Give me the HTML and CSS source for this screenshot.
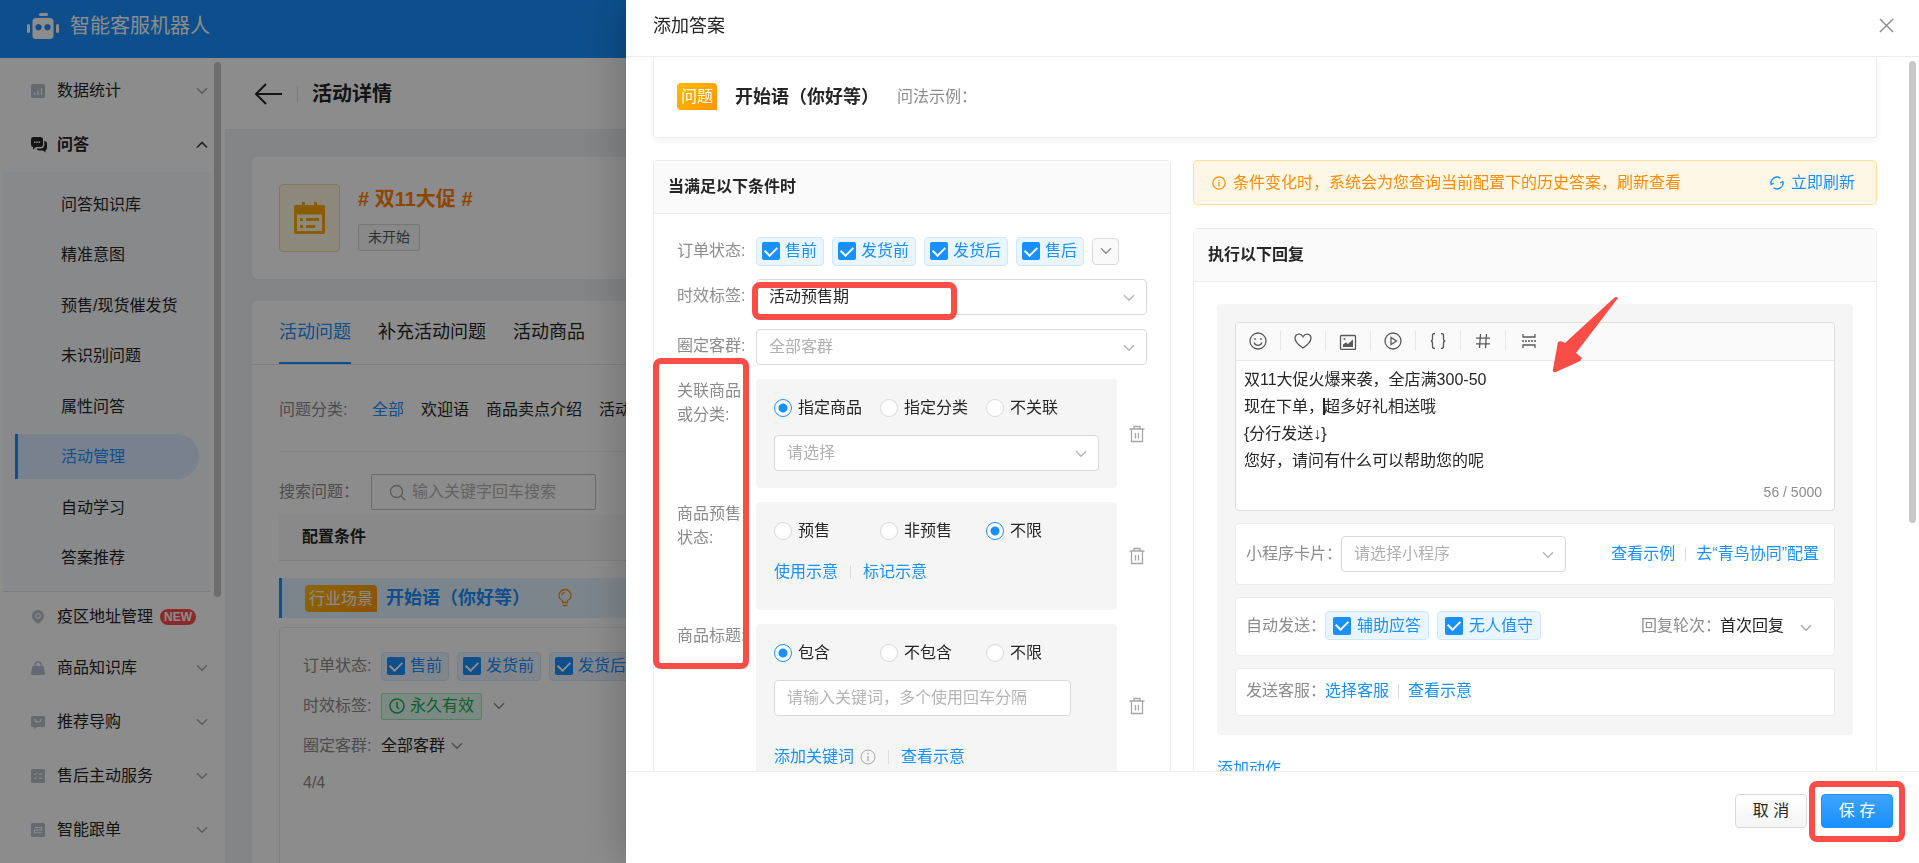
FILE: index.html
```html
<!DOCTYPE html>
<html lang="zh-CN">
<head>
<meta charset="utf-8">
<title>智能客服机器人</title>
<link rel="stylesheet" href="styles.css">
</head>
<body>
<svg class="defs" aria-hidden="true">
  <symbol id="down" viewBox="0 0 12 8"><path d="M1 1.2l5 5 5-5" fill="none" stroke="currentColor" stroke-width="1.4"/></symbol>
  <symbol id="up" viewBox="0 0 12 8"><path d="M1 6.5l5-5 5 5" fill="none" stroke="currentColor" stroke-width="1.6"/></symbol>
  <symbol id="trash" viewBox="0 0 16 18"><path d="M.5 4h15M5 3.500V1.500h6v2M2.500 4v12.500h11V4M6.500 8v5.500M9.500 8v5.500" fill="none" stroke="currentColor" stroke-width="1.3"/></symbol>
</svg>

<div class="app">
  <header class="topbar">
    <svg class="logo" viewBox="0 0 32 26" fill="#fff"><rect x="12" y="0" width="9" height="3" rx="1.500"/><rect x="0" y="11" width="3" height="9" rx="1.500"/><rect x="29" y="11" width="3" height="9" rx="1.500"/><path fill-rule="evenodd" d="M9 5h14q3.500 0 3.500 3.500v14q0 3.500-3.500 3.500H9q-3.500 0-3.500-3.500v-14Q5.500 5 9 5zM11.500 11a3.200 3.200 0 1 0 .01 0zM20.500 11a3.200 3.200 0 1 0 .01 0z"/></svg>
    <span>智能客服机器人</span>
  </header>

  <div class="columns">
    <nav class="sidebar">
      <a href="#" class="item"><svg class="ico" viewBox="0 0 14 14"><rect width="14" height="14" rx="1.500"/><path d="M3.500 11V8.500M7 11V6.500M10.500 11V4" stroke="#fff" stroke-width="1.200"/></svg><span>数据统计</span><svg class="chev"><use href="#down"/></svg></a>
      <a href="#" class="item open"><svg class="ico chat" viewBox="0 0 16 16"><path d="M2.500 0h7Q12 0 12 2.500v5Q12 10 9.500 10H5L2 12.500V10Q0 9.500 0 7.500v-5Q0 0 2.500 0z"/><path d="M13.300 4Q16 4.200 16 6.500v4.500q0 2-1.500 2.300V15.500L12 13.500H8Q6 13.500 5.500 11.500h4q3.800-.2 3.800-4z"/><path d="M3 5.200h1.500M5.300 5.200h1.500M7.600 5.200h1.500" stroke="#fff" stroke-width="1.400"/></svg><span>问答</span><svg class="chev"><use href="#up"/></svg></a>
      <div class="sub">
        <a href="#">问答知识库</a>
        <a href="#">精准意图</a>
        <a href="#">预售/现货催发货</a>
        <a href="#">未识别问题</a>
        <a href="#">属性问答</a>
        <a href="#" class="current">活动管理</a>
        <a href="#">自动学习</a>
        <a href="#">答案推荐</a>
      </div>
      <a href="#" class="item short"><svg class="ico" viewBox="0 0 14 14"><path fill-rule="evenodd" d="M7 0a6 6 0 0 1 6 6q0 4-6 8Q1 10 1 6a6 6 0 0 1 6-6zM7 3a3 3 0 1 0 .01 0z"/><circle cx="7" cy="6" r="1.800"/></svg><span>疫区地址管理</span><em class="new">NEW</em></a>
      <a href="#" class="item"><svg class="ico" viewBox="0 0 14 14"><path d="M1.500 5h11L14 12.500q0 1.500-1.500 1.500h-11Q0 14 0 12.500z"/><path d="M4 7V4a3 3 0 0 1 6 0v3" fill="none" stroke="#b9c1cc" stroke-width="1.400"/></svg><span>商品知识库</span><svg class="chev"><use href="#down"/></svg></a>
      <a href="#" class="item"><svg class="ico" viewBox="0 0 14 14"><path d="M1.500 1h11Q14 1 14 2.500v8q0 1.500-1.500 1.500H6l-3 2v-2H1.500Q0 12 0 10.500v-8Q0 1 1.500 1z"/><path d="M4 4q0 3 3 3t3-3" fill="none" stroke="#fff" stroke-width="1.200"/></svg><span>推荐导购</span><svg class="chev"><use href="#down"/></svg></a>
      <a href="#" class="item"><svg class="ico" viewBox="0 0 14 14"><rect width="14" height="14" rx="1.500"/><path d="M3 5l1 1 1.500-2M3 9l1 1 1.500-2M7.500 5.200H11M7.500 9.200H11" fill="none" stroke="#fff"/></svg><span>售后主动服务</span><svg class="chev"><use href="#down"/></svg></a>
      <a href="#" class="item"><svg class="ico" viewBox="0 0 14 14"><rect width="14" height="14" rx="1.500"/><path d="M3.500 4.500h7v2.500h-7v2.800h7" fill="none" stroke="#fff" stroke-width="1.100"/></svg><span>智能跟单</span><svg class="chev"><use href="#down"/></svg></a>
      <i class="thumb"></i>
    </nav>

    <main class="main">
      <div class="pagehead">
        <svg class="back" viewBox="0 0 28 22"><path d="M12 1L2 11l10 10M2 11h26" fill="none" stroke="currentColor" stroke-width="2"/></svg>
        <i class="bar"></i>
        <h1>活动详情</h1>
      </div>
      <section class="card promo">
        <div class="promo-icon"><svg viewBox="0 0 31 32" fill="#ffa800"><path fill-rule="evenodd" d="M8 0h3v3h9V0h3v3h6q2 0 2 2v25q0 2-2 2H2q-2 0-2-2V5q0-2 2-2h6zM3 12.500V29h25V12.500z"/><path d="M6 16h3v3H6zM12 16h13v3H12zM6 23h3v3H6zM12 23h9v3h-9z"/></svg></div>
        <div>
          <h2># 双11大促 #</h2>
          <span class="state">未开始</span>
        </div>
      </section>
      <section class="card">
        <div class="tabs"><a href="#" class="on">活动问题</a><a href="#">补充活动问题</a><a href="#">活动商品</a></div>
        <div class="inner">
          <div class="filter"><span class="dim">问题分类:</span><a href="#" class="on">全部</a><a href="#">欢迎语</a><a href="#">商品卖点介绍</a><a href="#">活动</a></div>
          <div class="search">
            <label class="dim" for="q">搜索问题：</label>
            <div class="searchbox"><svg viewBox="0 0 17 17"><path d="M11.800 11.800l4.500 4.500M13.500 7.500a6 6 0 1 1-12 0 6 6 0 0 1 12 0z" fill="none" stroke="#a6a6a6" stroke-width="1.300"/></svg><input id="q" placeholder="输入关键字回车搜索"></div>
          </div>
          <div class="thead">配置条件</div>
          <div class="qrow"><span class="tag">行业场景</span><b>开始语（你好等）</b>
            <svg class="bulb" viewBox="0 0 14 18" fill="none" stroke="#fa8c16" stroke-width="1.300"><path d="M4.500 13.500v-2Q1 10 1 6.500a6 6 0 0 1 12 0q0 3.500-3.500 5v2zM4.500 16.500h5M4 6.500q0-2.500 2.500-3"/></svg></div>
          <div class="answer">
            <div class="line chips"><span class="dim">订单状态:</span>
              <label class="chip"><input type="checkbox" checked>售前</label>
              <label class="chip"><input type="checkbox" checked>发货前</label>
              <label class="chip"><input type="checkbox" checked>发货后</label></div>
            <div class="line"><span class="dim">时效标签:</span><span class="valid"><svg viewBox="0 0 16 16" fill="none" stroke="currentColor" stroke-width="1.500"><circle cx="8" cy="8" r="7"/><path d="M8 4v5l2 2"/></svg>永久有效</span><svg class="chev"><use href="#down"/></svg></div>
            <div class="line tight"><span class="dim">圈定客群:</span><span>全部客群</span><svg class="chev near"><use href="#down"/></svg></div>
            <div class="dim">4/4</div>
          </div>
        </div>
      </section>
    </main>
  </div>
</div>

<div class="mask"></div>

<aside class="drawer">
  <header class="dhead"><span>添加答案</span>
    <button type="button" class="close" aria-label="关闭"><svg viewBox="0 0 16 16"><path d="M1 1l14 14M15 1L1 15" stroke="currentColor" stroke-width="1.500"/></svg></button>
  </header>

  <div class="dbody">
    <section class="question"><span class="tag">问题</span><b>开始语（你好等）</b><span class="dim">问法示例：</span></section>
    <div class="split">
      <section class="panel">
        <h3>当满足以下条件时</h3>
        <form class="form">
          <div class="row center"><span class="lab">订单状态:</span>
            <div class="chips">
              <label class="chip"><input type="checkbox" checked>售前</label>
              <label class="chip"><input type="checkbox" checked>发货前</label>
              <label class="chip"><input type="checkbox" checked>发货后</label>
              <label class="chip"><input type="checkbox" checked>售后</label>
              <button type="button" class="more" aria-label="更多"><svg class="chev"><use href="#down"/></svg></button>
            </div>
          </div>
          <div class="row"><label class="lab mid" for="period">时效标签:</label>
            <div class="pick dark"><select id="period"><option>活动预售期</option></select><svg class="chev"><use href="#down"/></svg></div></div>
          <div class="row"><label class="lab mid" for="group">圈定客群:</label>
            <div class="pick"><select id="group"><option>全部客群</option></select><svg class="chev"><use href="#down"/></svg></div></div>
          <div class="row"><span class="lab">关联商品或分类:</span>
            <div class="block">
              <div class="radios">
                <label><input type="radio" name="rel" checked>指定商品</label><label><input type="radio" name="rel">指定分类</label><label><input type="radio" name="rel">不关联</label>
              </div>
              <div class="pick"><select aria-label="指定商品"><option>请选择</option></select><svg class="chev"><use href="#down"/></svg></div>
            </div>
            <button type="button" class="del" aria-label="删除"><svg><use href="#trash"/></svg></button></div>
          <div class="row"><span class="lab">商品预售状态:</span>
            <div class="block">
              <div class="radios">
                <label><input type="radio" name="pre">预售</label><label><input type="radio" name="pre">非预售</label><label><input type="radio" name="pre" checked>不限</label>
              </div>
              <div class="links"><a href="#">使用示意</a><i></i><a href="#">标记示意</a></div>
            </div>
            <button type="button" class="del" aria-label="删除"><svg><use href="#trash"/></svg></button></div>
          <div class="row"><span class="lab">商品标题:</span>
            <div class="block">
              <div class="radios">
                <label><input type="radio" name="ttl" checked>包含</label><label><input type="radio" name="ttl">不包含</label><label><input type="radio" name="ttl">不限</label>
              </div>
              <input class="words" aria-label="关键词" placeholder="请输入关键词，多个使用回车分隔">
              <div class="links low"><a href="#">添加关键词</a><svg class="info" viewBox="0 0 16 16" fill="none" stroke="currentColor"><circle cx="8" cy="8" r="7"/><path d="M8 7v5M8 4v1.500" stroke-width="1.300"/></svg><i></i><a href="#">查看示意</a></div>
            </div>
            <button type="button" class="del" aria-label="删除"><svg><use href="#trash"/></svg></button></div>
        </form>
        <div class="mark mark-period"></div>
        <div class="mark mark-labels"></div>
      </section>

      <div class="reply">
        <div class="alert">
          <svg viewBox="0 0 14 14" fill="none" stroke="currentColor" stroke-width="1.200"><circle cx="7" cy="7" r="6.200"/><path d="M7 6v4.500M7 3.500v1.300"/></svg>
          <span>条件变化时，系统会为您查询当前配置下的历史答案，刷新查看</span>
          <a href="#"><svg viewBox="0 0 14 14" fill="none" stroke="currentColor" stroke-width="1.300"><path d="M1.200 8.500A6 6 0 0 1 10.500 2.200M12.800 5.500A6 6 0 0 1 3.500 11.800M.5 5.500l.7 3 2.600-1.300M13.500 8.500l-.7-3-2.600 1.300"/></svg>立即刷新</a>
        </div>
        <section class="panel">
          <h3>执行以下回复</h3>
          <div class="pbody">
            <div class="stack">
              <div class="editor">
                <div class="tools">
                  <button type="button" aria-label="表情"><svg viewBox="0 0 18 18"><circle cx="9" cy="9" r="8"/><path d="M6 6v2M12 6v2M5 10.500q1.200 2.800 4 2.800t4-2.800"/></svg></button>
                  <button type="button" aria-label="收藏"><svg viewBox="0 0 18 18"><path d="M9 16Q1 10.500 1 6.200 1.200 2.300 4.800 2.100 7.500 2 9 4.800 10.500 2 13.200 2.100 16.800 2.300 17 6.200 17 10.500 9 16z"/></svg></button>
                  <button type="button" aria-label="图片"><svg viewBox="0 0 18 18"><rect x="1.500" y="3.500" width="15" height="14" rx="1"/><path d="M4 15v-2.500l3-2 2 1.500 5-4.500V15z" fill="currentColor" stroke="none"/><path d="M4.500 7h2"/></svg></button>
                  <button type="button" aria-label="视频"><svg viewBox="0 0 18 18"><circle cx="9" cy="9" r="8"/><path d="M7 5.500v7L12.500 9z"/></svg></button>
                  <button type="button" aria-label="变量"><svg viewBox="0 0 18 18"><path d="M6 1.500q-2.500 0-2.500 2v3Q3.500 9 1.800 9q1.700 0 1.700 2.500v3q0 2 2.500 2M12 1.500q2.500 0 2.500 2v3Q14.500 9 16.200 9q-1.700 0-1.700 2.500v3q0 2-2.500 2"/></svg></button>
                  <button type="button" aria-label="话题"><svg viewBox="0 0 18 18"><path d="M6.500 2l-1 14M12.500 2l-1 14M2 6.200h14M2 11.800h14"/></svg></button>
                  <button type="button" aria-label="分行"><svg viewBox="0 0 18 18"><path d="M3 2v3h12V2M3 16v-3h12v3"/><path d="M2 9h14" stroke-dasharray="2 1"/></svg></button>
                </div>
                <textarea rows="4" aria-label="回复内容">双11大促火爆来袭，全店满300-50
现在下单，超多好礼相送哦
{分行发送↓}
您好，请问有什么可以帮助您的呢</textarea>
                <i class="caret"></i>
                <div class="count">56 / 5000</div>
              </div>
              <div class="box tall"><label class="dim" for="mini">小程序卡片：</label>
                <div class="pick mini"><select id="mini"><option>请选择小程序</option></select><svg class="chev"><use href="#down"/></svg></div>
                <div class="links end"><a href="#">查看示例</a><i></i><a href="#">去“青鸟协同”配置</a></div></div>
              <div class="box medium"><span class="dim">自动发送：</span>
                <div class="chips wide"><label class="chip"><input type="checkbox" checked>辅助应答</label><label class="chip"><input type="checkbox" checked>无人值守</label></div>
                <div class="turn"><label class="dim" for="turn">回复轮次：</label><div class="plain"><select id="turn"><option>首次回复</option></select><svg class="chev"><use href="#down"/></svg></div></div></div>
              <div class="box"><span class="dim">发送客服：</span><div class="links near"><a href="#">选择客服</a><i></i><a href="#">查看示意</a></div></div>
            </div>
            <a href="#" class="action">添加动作</a>
          </div>
        </section>
      </div>
    </div>
    <i class="thumb"></i>
  </div>

  <footer class="dfoot">
    <button type="button" class="btn">取 消</button>
    <div class="savewrap"><button type="button" class="btn primary">保 存</button><div class="mark mark-save"></div></div>
  </footer>
  <svg class="arrow" viewBox="0 0 66 76"><path d="M62 1q2-2 4 0L24 56l6 5q-1 3-4 4L4 75q-4 1-3-3L6 45q3-2 7 1z" fill="#f94d48"/></svg>
</aside>
</body>
</html>
```

FILE: styles.css
```css
* { box-sizing: border-box; }
html, body { height: 100%; overflow: hidden; }
body {
  margin: 0;
  font: 16px/24px "Liberation Sans", "Noto Sans CJK SC", sans-serif;
  color: #262626;
}
a { color: #1890ff; text-decoration: none; }
button, input, select, textarea { font: inherit; color: inherit; margin: 0; }
button { border: 0; padding: 0; background: none; }
h1, h2, h3 { margin: 0; }
svg { display: block; flex: none; }
.defs { position: absolute; width: 0; height: 0; }
.dim { color: #8c8c8c; white-space: nowrap; }
.chev { width: 12px; height: 8px; color: #a6a6a6; }

.app { height: 100%; display: flex; flex-direction: column; overflow: hidden; }
.topbar {
  height: 58px; flex: none; padding: 0 0 6px 27px;
  display: flex; align-items: center; gap: 11px;
  background: #1890ff; color: #fff; font-size: 20px;
}
.logo { width: 32px; height: 26px; }
.columns { flex: 1; min-height: 0; display: flex; overflow: hidden; }

.sidebar {
  position: relative; width: 225px; flex: none; overflow: hidden;
  padding: 6px 0 0 3px; background: #fff;
}
.item {
  width: 222px; height: 54px; padding: 0 17px 0 28px;
  display: flex; align-items: center; color: #262626;
}
.item span { margin-left: 12px; }
.item .ico { width: 14px; height: 14px; fill: #b9c1cc; }
.item .ico.chat { width: 16px; height: 16px; fill: #262626; margin-right: -2px; }
.item .chev { margin-left: auto; }
.item.open { font-weight: 700; }
.item.open .chev { color: #404040; }
.item.short { height: 49px; }
.new {
  margin-left: 7px; padding: 0 4px; border-radius: 8px;
  background: #ff4d4f; color: #fff; font: 700 12px/16px "Liberation Sans", sans-serif;
}
.sub {
  height: 420px; width: 207px; padding: 10px 11px 11px 12px;
  display: grid; align-content: space-between;
  background: #f6f9fd; border-bottom: 1px solid #dfe5ee;
}
.sub a {
  height: 45px; line-height: 46px; padding-left: 43px;
  border-left: 3px solid transparent; border-radius: 0 23px 23px 0; color: #262626;
}
.sub .current { color: #1890ff; background: #dcedff; border-left-color: #1890ff; }
.thumb { position: absolute; width: 7px; border-radius: 4px; background: #c8c8c8; }
.sidebar .thumb { top: 4px; right: 4px; height: 535px; }

.main { flex: 1; min-width: 0; overflow: hidden; background: #eef0f4; }
.pagehead {
  height: 71px; padding-left: 29px; display: flex; align-items: center; background: #fff;
}
.back { width: 28px; height: 22px; }
.bar { width: 1px; height: 16px; margin: 0 14px 0 15px; background: #e4e4e4; }
h1 { font-size: 20px; line-height: 28px; }
.card { margin: 28px 28px 22px 27px; border-radius: 6px; background: #fff; }
.card + .card { margin-top: 22px; }
.promo { padding: 27px; height: 122px; display: flex; gap: 18px; }
.promo-icon {
  width: 61px; height: 68px; display: grid; place-items: center;
  border: 1px solid #ffd591; border-radius: 4px; background: #fff8e0;
}
.promo-icon svg { width: 31px; height: 32px; }
h2 { font-size: 20px; line-height: 30px; color: #ff8000; margin-bottom: 10px; }
.state {
  display: inline-block; padding: 0 9px; border: 1px solid #d9d9d9; border-radius: 2px;
  background: #fafafa; color: #595959; font-size: 14px; line-height: 25px;
}
.tabs { height: 64px; padding: 0 27px; display: flex; gap: 27px; border-bottom: 1px solid #e8e8e8; }
.tabs a { font-size: 18px; line-height: 63px; color: #262626; }
.tabs .on { color: #1890ff; border-bottom: 2px solid #1890ff; }
.inner { padding: 0 27px; }
.filter {
  height: 87px; padding-top: 3px; display: flex; align-items: center; gap: 17px;
  border-bottom: 1px solid #f0f0f0; white-space: nowrap;
}
.filter .dim { width: 76px; }
.filter a { color: #262626; }
.filter .on { color: #1890ff; }
.search { padding: 22px 0 5px; display: flex; align-items: center; }
.search .dim { width: 92px; }
.searchbox {
  width: 225px; height: 36px; padding: 0 17px; display: flex; align-items: center; gap: 6px;
  border: 1px solid #bfbfbf; border-radius: 2px;
}
.searchbox svg { width: 17px; height: 17px; }
.searchbox input { width: 160px; border: 0; padding: 0; background: none; }
::placeholder { color: #b5b5b5; opacity: 1; }
.thead {
  height: 46px; padding-left: 23px; line-height: 44px; font-weight: 700;
  background: #fafafa; border-bottom: 1px solid #e8e8e8;
}
.qrow {
  height: 40px; margin: 17px 0 9px; padding-left: 23px;
  display: flex; align-items: center; gap: 9px;
  border-left: 3px solid #1890ff; background: #e4f3ff; font-size: 18px; color: #1890ff;
}
.tag {
  padding: 0 4px; border-radius: 4px 4px 0 4px; font-size: 16px; line-height: 27px;
  color: #fff; background: linear-gradient(135deg, #ffba00, #ff9500);
}
.bulb { width: 14px; height: 18px; margin-left: 19px; }
.answer { min-height: 480px; padding: 23px; border: 1px solid #ececec; border-radius: 4px; }
.line { height: 42px; display: flex; align-items: center; white-space: nowrap; }
.line.chips { height: 30px; margin-bottom: 4px; }
.line > .dim { width: 78px; flex: none; }
.line.chips > .dim { width: 70px; }
.line.tight { height: 38px; margin-bottom: 6px; }
.line .chev { margin-left: 11px; color: #8c8c8c; }
.line .chev.near { margin-left: 6px; }
.valid {
  height: 27px; padding: 0 7px; display: flex; align-items: center; gap: 5px;
  border: 1px solid #9be8b8; border-radius: 2px; background: #e4fbee; color: #13ae57;
}
.valid svg { width: 16px; height: 16px; }

.chips { display: flex; align-items: center; gap: 8px; }
.chip {
  height: 29px; padding: 0 6px 0 5px; display: flex; align-items: center; gap: 5px;
  border: 1px solid #cfe8ff; border-radius: 4px; background: #e9f5ff; color: #1890ff;
  white-space: nowrap;
}
.chips.wide .chip { padding: 0 7px; gap: 6px; }
input[type="checkbox"] {
  appearance: none; width: 18px; height: 18px; flex: none;
  display: grid; place-items: center; border-radius: 2px; background: #1890ff;
}
input[type="checkbox"]::after {
  content: ""; width: 6px; height: 10px; margin-bottom: 3px;
  border: solid #fff; border-width: 0 2px 2px 0; transform: rotate(45deg);
}

.mask { position: fixed; inset: 0; background: rgba(0, 0, 0, .45); }

.drawer {
  position: fixed; inset: 0 0 0 626px; display: flex; flex-direction: column;
  background: #fff; box-shadow: -4px 0 40px rgba(0, 0, 0, .22);
}
.dhead {
  height: 57px; flex: none; padding: 0 25px 5px 27px;
  display: flex; align-items: center; justify-content: space-between;
  border-bottom: 1px solid #ececec; font-size: 18px;
}
.close { color: #8c8c8c; }
.close svg { width: 15px; height: 15px; }
.dbody { position: relative; flex: 1; min-height: 0; overflow: hidden; padding: 0 42px 0 27px; }
.dbody > .thumb { top: 4px; right: 3px; height: 462px; }
.question {
  padding: 26px 23px 27px; display: flex; align-items: center;
  border: 1px solid #ececec; border-top: 0; border-radius: 0 0 4px 4px;
  box-shadow: 0 3px 8px rgba(0, 0, 0, .05);
}
.question b { margin: 0 18px; font-size: 18px; }
.split {
  display: grid; grid-template-columns: minmax(0, 518fr) minmax(0, 684fr);
  gap: 22px; margin-top: 22px;
}
.panel { position: relative; border: 1px solid #ececec; border-radius: 4px; }
h3 {
  height: 53px; padding-left: 14px; line-height: 51px; font-size: 16px; font-weight: 700;
  border-bottom: 1px solid #ececec; background: #fafafa;
}
.form { padding: 23px 23px 40px; display: grid; gap: 14px; }
.row { display: flex; min-width: 0; }
.row.center { align-items: center; height: 28px; }
.lab { width: 70px; margin-right: 9px; flex: none; color: #8c8c8c; }
.lab.mid { line-height: 34px; }
.more {
  width: 27px; height: 27px; display: grid; place-items: center;
  border: 1px solid #d9d9d9; border-radius: 4px; background: #fafafa;
}
.more .chev { color: #8c8c8c; }
.pick { position: relative; flex: 1; min-width: 0; color: #b0b0b0; }
.pick.dark { color: #262626; }
.pick select {
  appearance: none; display: block; width: 100%; height: 36px; padding: 0 30px 0 12px;
  border: 1px solid #d9d9d9; border-radius: 4px; background: #fff;
}
.pick .chev { position: absolute; right: 12px; top: 15px; color: #b5b5b5; }
.block {
  flex: 1; min-width: 0; min-height: 108px; padding: 17px 18px;
  display: grid; align-content: start; gap: 15px; border-radius: 4px; background: #f5f5f5;
}
.radios { display: grid; grid-template-columns: repeat(3, 106px); }
.radios label { display: flex; align-items: center; gap: 6px; white-space: nowrap; }
input[type="radio"] {
  appearance: none; width: 18px; height: 18px; flex: none;
  border: 1px solid #d9d9d9; border-radius: 50%; background: #fff;
}
input[type="radio"]:checked { border: 1px solid #1890ff; background: radial-gradient(#1890ff 4px, #fff 5px); }
.words {
  width: 100%; max-width: 297px; height: 36px; padding: 0 12px;
  border: 1px solid #d9d9d9; border-radius: 4px; background: #fff;
}
.links { display: flex; align-items: center; height: 28px; white-space: nowrap; }
.links i { width: 1px; height: 14px; margin: 0 12px; background: #dcdcdc; }
.links.low { margin-top: 12px; }
.links.end { margin-left: auto; padding-right: 15px; }
.links.end i { margin: 0 10px; }
.links.near i { margin: 0 9px; }
.info { width: 16px; height: 16px; margin-left: 6px; color: #a6a6a6; }
.del { align-self: center; margin-left: 12px; color: #a6a6a6; }
.del svg { width: 16px; height: 18px; margin-right: 2px; }

.reply { display: grid; align-content: start; gap: 23px; }
.alert {
  height: 45px; padding: 0 21px 0 18px; display: flex; align-items: center; gap: 7px;
  border: 1px solid #ffe0a0; border-radius: 4px; background: #fff7e6; color: #ff8c00;
  white-space: nowrap;
}
.alert svg { width: 14px; height: 14px; }
.alert a { margin-left: auto; display: flex; align-items: center; gap: 7px; }
.pbody { padding: 22px 23px 23px; }
.stack {
  padding: 18px 18px 19px; display: grid; gap: 12px;
  border-radius: 4px; background: #f5f5f5;
}
.editor {
  position: relative; border: 1px solid #dcdcdc; border-radius: 4px; background: #fff; overflow: hidden;
}
.tools {
  height: 38px; padding-bottom: 2px; display: flex; align-items: center;
  background: #fafafa; border-bottom: 1px solid #e8e8e8;
}
.tools button {
  width: 45px; height: 20px; display: grid; place-items: center; color: #595959;
  border-right: 1px solid #e8e8e8;
}
.tools button:last-child { border-right: 0; }
.tools svg { width: 18px; height: 18px; fill: none; stroke: currentColor; stroke-width: 1.300; }
textarea {
  display: block; width: 100%; padding: 5px 8px; border: 0; resize: none; overflow: hidden;
  line-height: 27px; background: none;
}
.caret { position: absolute; left: 87px; top: 75px; width: 2px; height: 17px; background: #262626; }
.count { padding: 0 12px 5px; text-align: right; font-size: 14px; line-height: 26px; color: #8c8c8c; }
.box {
  min-height: 48px; padding: 0 0 2px 10px; display: flex; align-items: center;
  border: 1px solid #ececec; border-radius: 4px; background: #fff;
}
.box.medium { min-height: 59px; }
.box.tall { min-height: 62px; padding-bottom: 0; }
.box .dim { width: 79px; }
.box.tall .dim { width: 95px; }
.pick.mini { flex: 0 1 225px; }
.turn { margin-left: auto; display: flex; align-items: center; }
.plain { position: relative; padding-right: 22px; }
.plain select { appearance: none; width: 92px; padding: 0; border: 0; background: none; }
.plain .chev { position: absolute; right: 22px; top: 10px; }
.action { display: block; margin-top: 22px; }

.dfoot {
  height: 92px; flex: none; padding: 22px 26px 0; display: flex; justify-content: flex-end; gap: 14px;
  border-top: 1px solid #ececec; background: #fff;
}
.btn {
  width: 72px; height: 34px; border: 1px solid #d9d9d9; border-radius: 4px;
  background: linear-gradient(#fff, #f5f5f5);
}
.btn.primary { border-color: #1890ff; color: #fff; background: linear-gradient(#40a3ff, #1890ff); }
.savewrap { position: relative; height: 34px; }
.mark { position: absolute; border: 6px solid #f94d48; border-radius: 8px; pointer-events: none; }
.mark-period { left: 98px; top: 121px; width: 205px; height: 38px; }
.mark-labels { left: -1px; top: 197px; width: 96px; height: 311px; }
.mark-save { inset: -13px -12px -14px; }
.arrow { position: absolute; left: 926px; top: 297px; width: 66px; height: 76px; }
```
